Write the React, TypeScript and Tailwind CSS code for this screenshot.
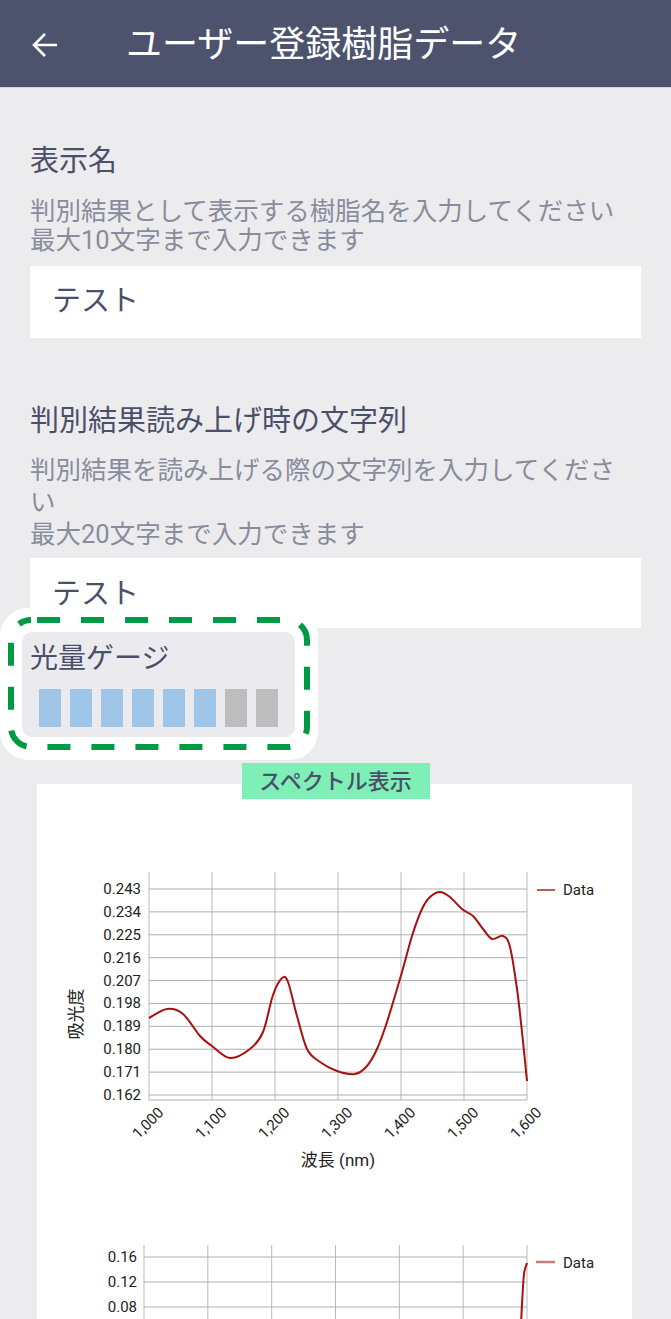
import React from 'react';

type Pt = [number, number];

const FONT = { fontFamily: 'Roboto, "Noto Sans CJK JP", sans-serif' };

// catmull-rom -> cubic bezier, good enough for a spectrum line
function smoothPath(pts: Pt[]) {
  let d = `M${pts[0][0]},${pts[0][1]}`;
  for (let i = 0; i < pts.length - 1; i++) {
    const p0 = pts[i - 1] ?? pts[i];
    const p1 = pts[i];
    const p2 = pts[i + 1];
    const p3 = pts[i + 2] ?? p2;
    const c1x = p1[0] + (p2[0] - p0[0]) / 6;
    const c1y = p1[1] + (p2[1] - p0[1]) / 6;
    const c2x = p2[0] - (p3[0] - p1[0]) / 6;
    const c2y = p2[1] - (p3[1] - p1[1]) / 6;
    d += ` C${c1x.toFixed(1)},${c1y.toFixed(1)} ${c2x.toFixed(1)},${c2y.toFixed(1)} ${p2[0]},${p2[1]}`;
  }
  return d;
}

const spectrum: Pt[] = [
  [112, 234], [130, 225], [146, 230], [163, 252], [175, 262], [193, 274],
  [213, 265], [226, 248], [236, 211], [245, 194], [251, 198], [260, 232],
  [270, 265], [283, 278], [300, 287], [318, 290], [330, 282], [340, 265],
  [350, 238], [365, 188], [375, 152], [385, 125], [393, 113], [403, 108],
  [413, 113], [425, 125], [436, 132], [446, 145], [455, 155], [466, 152],
  [473, 163], [480, 205], [485, 248], [490, 297],
];

const lowSpectrum: Pt[] = [
  [476, 300], [480, 230], [483, 170], [485, 130], [487, 100], [490, 89],
];

const xTicks = ['1,000', '1,100', '1,200', '1,300', '1,400', '1,500', '1,600'];
const yTicks1 = ['0.162', '0.171', '0.180', '0.189', '0.198', '0.207', '0.216', '0.225', '0.234', '0.243'];
const yTicks2 = ['0.16', '0.12', '0.08'];

function AbsorbanceChart() {
  const left = 112;
  const right = 490;
  const top = 88;
  const bottom = 316;
  const step = (right - left) / 6;

  return (
    <svg width="595" height="390" viewBox="0 0 595 390" className="block" style={FONT}>
      {xTicks.map((_, i) => (
        <line key={i} x1={left + step * i} x2={left + step * i} y1={top} y2={bottom} stroke="#b9b9b9" strokeWidth="1" />
      ))}
      {yTicks1.map((t, i) => {
        const y = 311 - i * 22.89;
        return (
          <g key={t}>
            <line x1={left} x2={right} y1={y} y2={y} stroke="#b0b0b0" strokeWidth="1" />
            <text x={left - 8} y={y} textAnchor="end" dominantBaseline="central" fontSize="15" fill="#222">
              {t}
            </text>
          </g>
        );
      })}
      <line x1={left} x2={right} y1={bottom} y2={bottom} stroke="#b0b0b0" strokeWidth="1" />
      <path d={smoothPath(spectrum)} fill="none" stroke="#aa1010" strokeWidth="2" />

      {xTicks.map((t, i) => (
        <text
          key={t}
          transform={`translate(${left + step * i + 12},326) rotate(-45)`}
          textAnchor="end"
          dominantBaseline="central"
          fontSize="15"
          fill="#222"
        >
          {t}
        </text>
      ))}
      <text transform="translate(39,230) rotate(-90)" textAnchor="middle" dominantBaseline="central" fontSize="17" fill="#222">
        吸光度
      </text>
      <text x={(left + right) / 2} y={376} textAnchor="middle" dominantBaseline="central" fontSize="17" fill="#222">
        波長 (nm)
      </text>

      <line x1="500" x2="518" y1="106" y2="106" stroke="#b22222" strokeWidth="1.5" />
      <text x="526" y="106" dominantBaseline="central" fontSize="15" fill="#222">
        Data
      </text>
    </svg>
  );
}

function SecondChart() {
  const left = 107;
  const right = 490;
  const top = 71;
  const step = (right - left) / 6;

  return (
    <svg width="595" height="150" viewBox="0 0 595 150" className="block" style={FONT}>
      {xTicks.map((_, i) => (
        <line key={i} x1={left + step * i} x2={left + step * i} y1={top} y2={150} stroke="#b9b9b9" strokeWidth="1" />
      ))}
      {yTicks2.map((t, i) => {
        const y = 83 + i * 25;
        return (
          <g key={t}>
            <line x1={left} x2={right} y1={y} y2={y} stroke="#b0b0b0" strokeWidth="1" />
            <text x={left - 7} y={y} textAnchor="end" dominantBaseline="central" fontSize="15" fill="#222">
              {t}
            </text>
          </g>
        );
      })}
      <path d={smoothPath(lowSpectrum)} fill="none" stroke="#aa1010" strokeWidth="2" />
      <line x1="499" x2="518" y1="88" y2="88" stroke="#cd7a7a" strokeWidth="2.5" />
      <text x="526" y="89" dominantBaseline="central" fontSize="15" fill="#222">
        Data
      </text>
    </svg>
  );
}

function LightGauge() {
  const levels = [1, 1, 1, 1, 1, 1, 0, 0];
  return (
    <div className="absolute left-0 top-[608px] h-[152px] w-[318px] rounded-[28px] bg-white">
      <svg className="absolute left-0 top-0" width="318" height="152" viewBox="0 0 318 152">
        <rect
          x="11"
          y="12"
          width="296"
          height="127"
          rx="20"
          fill="none"
          stroke="#009944"
          strokeWidth="6"
          strokeDasharray="23 21"
          strokeDashoffset="-6"
        />
      </svg>
      <div className="absolute left-[22px] top-[24px] h-[105px] w-[273px] rounded-[10px] bg-[#ebebef] pl-[8px] pt-[8px]">
        <div className="text-[28px] leading-[37px] text-[#4b4f69]">光量ゲージ</div>
        <div className="ml-[9px] mt-[12px] flex gap-[9px]">
          {levels.map((on, i) => (
            <div key={i} className={on ? 'h-[38px] w-[22px] bg-[#9fc5e8]' : 'h-[38px] w-[22px] bg-[#bdbdbd]'} />
          ))}
        </div>
      </div>
    </div>
  );
}

export default function App() {
  return (
    <div className="relative h-[1319px] w-full overflow-hidden bg-[#ececef]" style={FONT}>
      <header className="flex h-[88px] items-center border-b border-[#d4d4da] bg-[#4d526d]">
        <svg className="ml-[31px] mt-[2px]" width="28" height="28" viewBox="0 0 28 28">
          <path d="M26 14H3.5M14 3L3 14l11 11" fill="none" stroke="#fff" strokeWidth="2.6" strokeLinejoin="miter" />
        </svg>
        <h1 className="ml-[67px] mt-[2px] text-[36px] font-normal leading-none text-white">ユーザー登録樹脂データ</h1>
      </header>

      <div className="px-[30px] pt-[53px]">
        <section>
          <div className="text-[29px] leading-[40px] text-[#4b4f69]">表示名</div>
          <p className="mt-[16px] max-w-[596px] text-[25.5px] leading-[29px] text-[#898c9c]">
            判別結果として表示する樹脂名を入力してください
            <br />
            最大10文字まで入力できます
          </p>
          <div className="mt-[11px] flex h-[72px] items-center bg-white pl-[22px] text-[29px] text-[#4b4f69]">テスト</div>
        </section>

        <section className="mt-[63px]">
          <div className="text-[29px] leading-[40px] text-[#4b4f69]">判別結果読み上げ時の文字列</div>
          <p className="mt-[13px] max-w-[596px] text-[25.5px] leading-[32px] text-[#898c9c]">
            判別結果を読み上げる際の文字列を入力してください
            <br />
            最大20文字まで入力できます
          </p>
          <div className="mt-[8px] flex h-[70px] items-center bg-white pl-[22px] pt-[4px] text-[29px] text-[#4b4f69]">テスト</div>
        </section>
      </div>

      <LightGauge />

      <div className="relative z-10 mt-[135px] flex justify-center">
        <div className="flex h-[36px] w-[188px] items-center justify-center bg-[#7eefb6] text-[22px] font-medium text-[#4b4f69]">
          スペクトル表示
        </div>
      </div>

      <div className="-mt-[15px] ml-[37px] w-[595px] bg-white">
        <AbsorbanceChart />
        <SecondChart />
      </div>
    </div>
  );
}
